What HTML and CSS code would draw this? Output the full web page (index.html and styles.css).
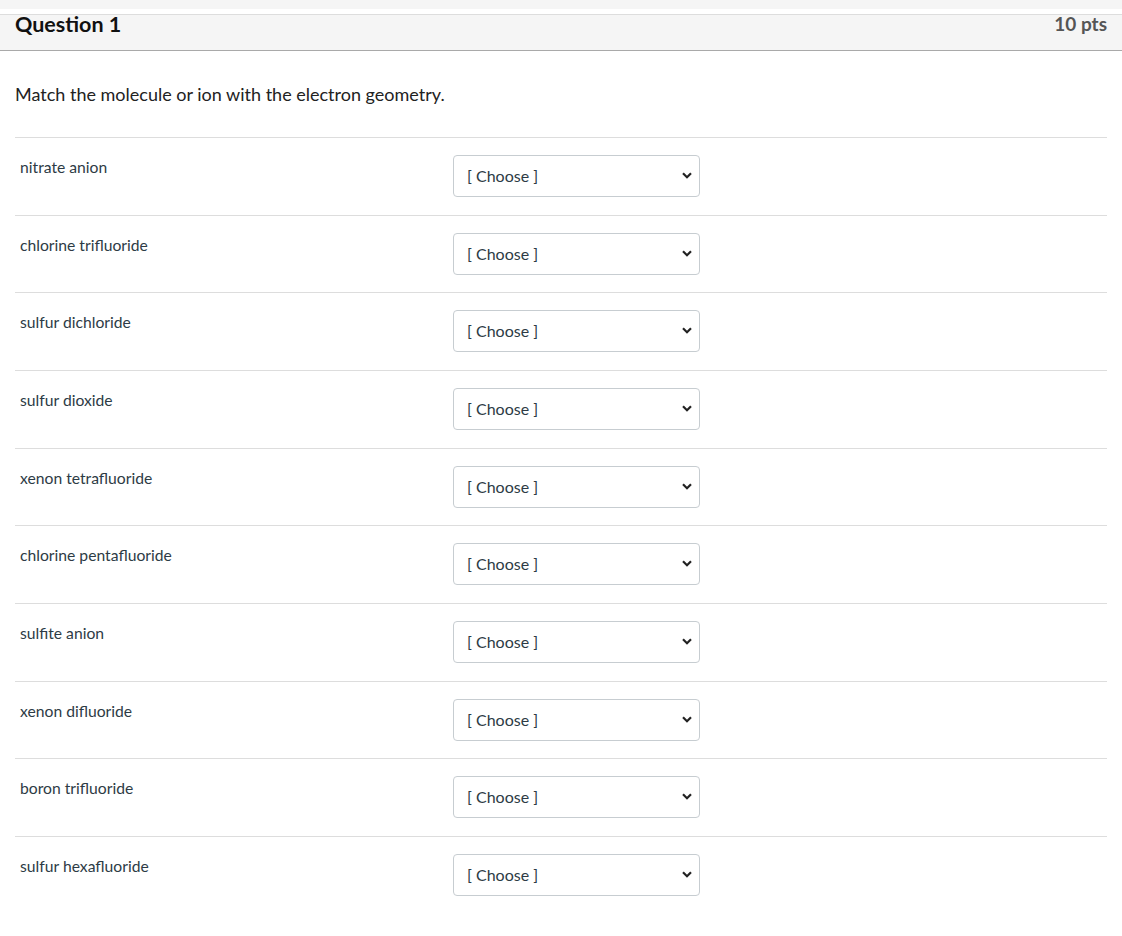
FILE: index.html
```html
<!DOCTYPE html>
<html>
<head>
<meta charset="utf-8">
<link rel="stylesheet" href="styles.css">
</head>
<body>
<div class="topstrip"></div>
<div class="question">
  <div class="header">
    <span class="title">Question 1</span>
    <span class="pts">10 pts</span>
  </div>
  <div class="content">
    <p class="prompt">Match the molecule or ion with the electron geometry.</p>
    <div class="answers">
      <div class="row"><div class="label">nitrate anion</div><div class="select"><span class="choose">[ Choose ]</span><svg class="chev" width="10" height="7" viewBox="0 0 10 7"><path d="M1 1.2 L5 5.2 L9 1.2" fill="none" stroke="#222" stroke-width="2.2"/></svg></div></div>
      <div class="row"><div class="label">chlorine trifluoride</div><div class="select"><span class="choose">[ Choose ]</span><svg class="chev" width="10" height="7" viewBox="0 0 10 7"><path d="M1 1.2 L5 5.2 L9 1.2" fill="none" stroke="#222" stroke-width="2.2"/></svg></div></div>
      <div class="row"><div class="label">sulfur dichloride</div><div class="select"><span class="choose">[ Choose ]</span><svg class="chev" width="10" height="7" viewBox="0 0 10 7"><path d="M1 1.2 L5 5.2 L9 1.2" fill="none" stroke="#222" stroke-width="2.2"/></svg></div></div>
      <div class="row"><div class="label">sulfur dioxide</div><div class="select"><span class="choose">[ Choose ]</span><svg class="chev" width="10" height="7" viewBox="0 0 10 7"><path d="M1 1.2 L5 5.2 L9 1.2" fill="none" stroke="#222" stroke-width="2.2"/></svg></div></div>
      <div class="row"><div class="label">xenon tetrafluoride</div><div class="select"><span class="choose">[ Choose ]</span><svg class="chev" width="10" height="7" viewBox="0 0 10 7"><path d="M1 1.2 L5 5.2 L9 1.2" fill="none" stroke="#222" stroke-width="2.2"/></svg></div></div>
      <div class="row"><div class="label">chlorine pentafluoride</div><div class="select"><span class="choose">[ Choose ]</span><svg class="chev" width="10" height="7" viewBox="0 0 10 7"><path d="M1 1.2 L5 5.2 L9 1.2" fill="none" stroke="#222" stroke-width="2.2"/></svg></div></div>
      <div class="row"><div class="label">sulfite anion</div><div class="select"><span class="choose">[ Choose ]</span><svg class="chev" width="10" height="7" viewBox="0 0 10 7"><path d="M1 1.2 L5 5.2 L9 1.2" fill="none" stroke="#222" stroke-width="2.2"/></svg></div></div>
      <div class="row"><div class="label">xenon difluoride</div><div class="select"><span class="choose">[ Choose ]</span><svg class="chev" width="10" height="7" viewBox="0 0 10 7"><path d="M1 1.2 L5 5.2 L9 1.2" fill="none" stroke="#222" stroke-width="2.2"/></svg></div></div>
      <div class="row"><div class="label">boron trifluoride</div><div class="select"><span class="choose">[ Choose ]</span><svg class="chev" width="10" height="7" viewBox="0 0 10 7"><path d="M1 1.2 L5 5.2 L9 1.2" fill="none" stroke="#222" stroke-width="2.2"/></svg></div></div>
      <div class="row"><div class="label">sulfur hexafluoride</div><div class="select"><span class="choose">[ Choose ]</span><svg class="chev" width="10" height="7" viewBox="0 0 10 7"><path d="M1 1.2 L5 5.2 L9 1.2" fill="none" stroke="#222" stroke-width="2.2"/></svg></div></div>
    </div>
  </div>
</div>
</body>
</html>
```
FILE: styles.css
```css
html, body {
  margin: 0;
  padding: 0;
  background: #ffffff;
  font-family: Lato, "Open Sans", "Liberation Sans", sans-serif;
  color: #2d3b45;
}
.topstrip {
  height: 9px;
  background: #f5f5f5;
  margin-bottom: 5px;
}
.header {
  display: flex;
  justify-content: space-between;
  align-items: flex-start;
  box-sizing: border-box;
  height: 37px;
  padding: 0 15px;
  background: #f5f5f5;
  border-top: 1px solid #dddddd;
  border-bottom: 1px solid #a9a9a9;
}
.title {
  font-size: 21.5px;
  line-height: 1;
  font-weight: 700;
  color: #111111;
  margin-top: -1px;
}
.pts {
  font-size: 19px;
  line-height: 1;
  font-weight: 700;
  color: #555555;
  margin-top: -1px;
}
.content {
  padding: 0 15px;
}
.prompt {
  margin: 0;
  padding-top: 32px;
  height: 54px;
  font-size: 18px;
  line-height: 22px;
  color: #222222;
}
.answers {
  display: flex;
  flex-direction: column;
}
.row {
  display: flex;
  align-items: flex-start;
  border-top: 1px solid #dddddd;
  padding: 17px 0 0;
  height: 59.67px;
}
.label {
  width: 433px;
  padding: 2px 0 0 5px;
  font-size: 15.7px;
  line-height: 20px;
  color: #2d3b45;
}
.select {
  display: flex;
  align-items: center;
  justify-content: space-between;
  box-sizing: border-box;
  width: 247px;
  height: 42px;
  padding: 0 7px 1px 13px;
  border: 1px solid #c7cdd1;
  border-radius: 4px;
  background: #ffffff;
}
.choose {
  font-size: 16px;
  color: #2d3b45;
}
.chev {
  display: block;
}
```
